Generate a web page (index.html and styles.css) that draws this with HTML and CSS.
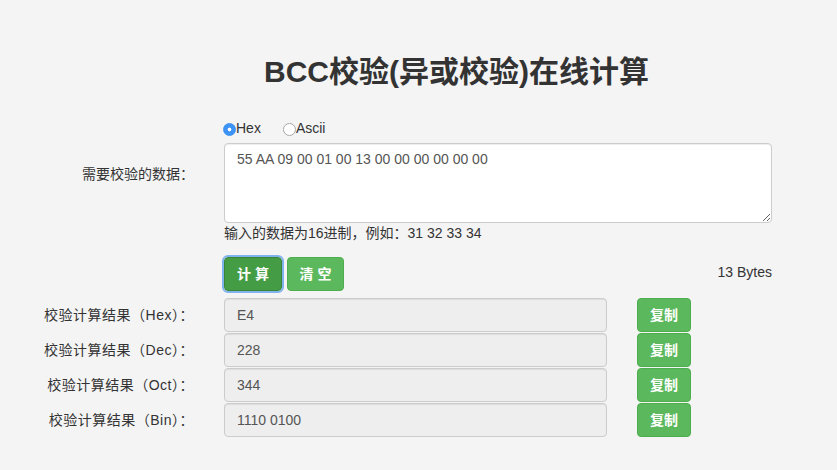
FILE: index.html
```html
<!DOCTYPE html>
<html lang="zh-CN">
<head>
<meta charset="utf-8">
<title>BCC校验(异或校验)在线计算</title>
<link rel="stylesheet" href="styles.css">
</head>
<body>
<main class="page">
  <h1 class="title">BCC校验(异或校验)在线计算</h1>
  <form class="form">
    <div class="row row-radios">
      <div class="label"></div>
      <div class="field radios">
        <label class="radio"><input type="radio" name="fmt" checked>Hex</label>
        <label class="radio"><input type="radio" name="fmt">Ascii</label>
      </div>
    </div>
    <div class="row row-data">
      <div class="label label-data">需要校验的数据：</div>
      <div class="field">
        <textarea class="textarea">55 AA 09 00 01 00 13 00 00 00 00 00 00</textarea>
      </div>
    </div>
    <div class="row row-hint">
      <div class="label"></div>
      <div class="field hint">输入的数据为16进制，例如：31 32 33 34</div>
    </div>
    <div class="row row-actions">
      <div class="label"></div>
      <div class="field actions">
        <button type="button" class="btn btn-primary">计 算</button>
        <button type="button" class="btn btn-clear">清 空</button>
        <span class="bytes">13 Bytes</span>
      </div>
    </div>
    <div class="results">
      <div class="row row-result">
        <div class="label">校验计算结果（Hex）：</div>
        <div class="field result-field">
          <input class="result" type="text" value="E4" readonly>
          <button type="button" class="btn btn-copy">复制</button>
        </div>
      </div>
      <div class="row row-result">
        <div class="label">校验计算结果（Dec）：</div>
        <div class="field result-field">
          <input class="result" type="text" value="228" readonly>
          <button type="button" class="btn btn-copy">复制</button>
        </div>
      </div>
      <div class="row row-result">
        <div class="label">校验计算结果（Oct）：</div>
        <div class="field result-field">
          <input class="result" type="text" value="344" readonly>
          <button type="button" class="btn btn-copy">复制</button>
        </div>
      </div>
      <div class="row row-result">
        <div class="label">校验计算结果（Bin）：</div>
        <div class="field result-field">
          <input class="result" type="text" value="1110 0100" readonly>
          <button type="button" class="btn btn-copy">复制</button>
        </div>
      </div>
    </div>
  </form>
</main>
</body>
</html>
```
FILE: styles.css
```css
* { box-sizing: border-box; }
html, body { margin: 0; padding: 0; }
body {
  background: #f4f4f4;
  color: #333;
  font-family: "Liberation Sans", "Noto Sans CJK SC", sans-serif;
  font-size: 14px;
  line-height: 1.42857;
}
.page { width: 837px; height: 470px; overflow: hidden; }
.title {
  margin: 54px 0 0 76px;
  text-align: center;
  font-size: 30px;
  line-height: 36px;
  font-weight: bold;
  color: #333;
}
.form { margin-top: 30px; }
.row {
  display: grid;
  grid-template-columns: 190px 548px;
  column-gap: 34px;
}
.label { text-align: right; }
.row-radios { height: 23px; }
.radios { display: flex; align-items: center; gap: 23px; height: 18px; }
.radio { display: flex; align-items: center; color: #333; }
.radio input {
  -webkit-appearance: none;
  appearance: none;
  width: 13px; height: 13px;
  margin: 0 0 0 -1px;
  border-radius: 50%;
  border: 1px solid #a8a8a8;
  background: #fff;
}
.radio input:checked {
  border-color: #3b8ff0;
  background: radial-gradient(circle, #fff 0 1.6px, #3d94f6 2.2px);
}
.label-data { padding-top: 22px; margin-right: -4px; }
.textarea {
  display: block;
  width: 548px; height: 80px;
  border: 1px solid #ccc;
  border-radius: 4px;
  background: #fff;
  box-shadow: inset 0 1px 1px rgba(0,0,0,.075);
  padding: 6px 12px;
  font: inherit;
  color: #555;
  resize: vertical;
}
.hint { height: 20px; line-height: 20px; }
.row-actions { margin-top: 14px; }
.actions { display: flex; align-items: center; gap: 5px; }
.btn {
  font: inherit;
  font-weight: bold;
  color: #fff;
  background: #5cb85c;
  border: 1px solid #4cae4c;
  border-radius: 4px;
  padding: 6px 0;
  height: 34px;
  line-height: 20px;
  text-align: center;
  white-space: nowrap;
  cursor: pointer;
}
.btn-primary {
  background: #449d44;
  border-color: #398439;
  outline: 2px solid #7fb3ee;
  outline-offset: 0;
  width: 58px;
}
.btn-clear { width: 57px; }
.bytes { margin-left: auto; margin-top: -3px; }
.results { margin-top: 7px; display: flex; flex-direction: column; gap: 1px; }
.row-result .label { line-height: 34px; margin-right: -4px; letter-spacing: 0.5px; }
.result-field { display: flex; align-items: center; gap: 30px; }
.result {
  width: 383px; height: 34px;
  border: 1px solid #ccc;
  border-radius: 4px;
  background: #eee;
  box-shadow: inset 0 1px 1px rgba(0,0,0,.075);
  padding: 6px 12px;
  font: inherit;
  color: #555;
}
.btn-copy { width: 54px; }
```
